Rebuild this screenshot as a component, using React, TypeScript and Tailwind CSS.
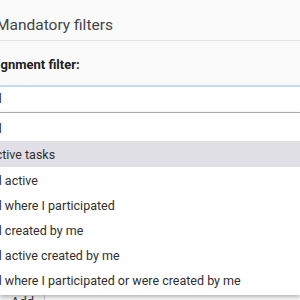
const options = [
  "All",
  "Active tasks",
  "All active",
  "All where I participated",
  "All created by me",
  "All active created by me",
  "All where I participated or were created by me",
];

export default function App() {
  return (
    <div className="relative w-[300px] h-[300px] overflow-hidden bg-[#fafafa] text-[#333] [font-family:Roboto,'Open_Sans',sans-serif]">
      <div className="-ml-[30px] w-[360px]">
        <div className="h-[41px] border-b border-[#e4e4e4] pt-[15px] pl-[26px]">
          <h1 className="text-[15.5px] leading-[20px] text-[#444]">Mandatory filters</h1>
        </div>
        <div className="pt-[16px]">
          <label className="block pl-[5px] text-[13px] font-bold leading-[16px] text-[#222]">
            Assignment filter:
          </label>
          <div className="mt-[12px] h-[27px] bg-white border-t-2 border-[#c4d8f6] flex items-center pl-[17.5px] text-[12.5px] text-[#333]">
            All
          </div>
        </div>
        <div className="pt-[178px] pl-[29px]">
          <button className="h-[30px] pl-[11px] pr-[10px] pt-[3px] flex items-start text-[13px] leading-[16px] text-[#333] bg-[#f4f4f4] border border-[#c8c8c8]">
            Add
          </button>
        </div>
      </div>

      <div className="absolute left-0 top-[112px] w-[300px] h-[183px] bg-white border-t border-[#a9a9a9] shadow-[0_2px_4px_rgba(0,0,0,0.28)]">
        <ul className="pt-[2px] text-[12.5px] text-[#2f2f2f]">
          {options.map((o, i) => (
            <li
              key={o}
              className={`${i < 2 ? "h-[26px]" : "h-[25px]"} flex items-center pt-[3px] -ml-[12.5px] ${
                i === 1 ? "bg-[#e1e0e6]" : ""
              }`}
            >
              {o}
            </li>
          ))}
        </ul>
      </div>
    </div>
  );
}
